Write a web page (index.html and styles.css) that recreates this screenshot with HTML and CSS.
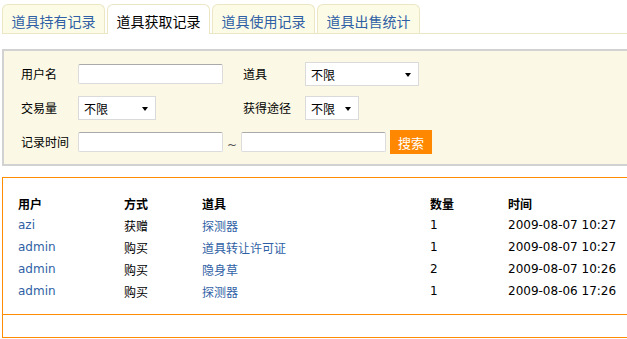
FILE: index.html
```html
<!DOCTYPE html>
<html>
  <head>
    <meta charset="utf-8">
    <link rel="stylesheet" href="styles.css">
  </head>
  <body>
    <div class="page">
      <ul class="tabs">
        <li><a href="#">道具持有记录</a></li>
        <li class="current"><a href="#">道具获取记录</a></li>
        <li><a href="#">道具使用记录</a></li>
        <li><a href="#">道具出售统计</a></li>
      </ul>

      <form class="search">
        <label>用户名</label>
        <div class="field"><input type="text" class="text"></div>
        <label>道具</label>
        <div class="field">
          <span class="select select-item"><select><option>不限</option></select></span>
        </div>

        <label>交易量</label>
        <div class="field">
          <span class="select select-amount"><select><option>不限</option></select></span>
        </div>
        <label>获得途径</label>
        <div class="field">
          <span class="select select-way"><select><option>不限</option></select></span>
        </div>

        <label>记录时间</label>
        <div class="field range">
          <input type="text" class="text">
          <span class="tilde">~</span>
          <input type="text" class="text">
          <button type="button" class="btn">搜索</button>
        </div>
      </form>

      <div class="result">
        <div class="list">
          <table>
            <colgroup>
              <col class="c-user">
              <col class="c-way">
              <col class="c-item">
              <col class="c-num">
              <col class="c-time">
            </colgroup>
            <tr>
              <th>用户</th><th>方式</th><th>道具</th><th>数量</th><th>时间</th>
            </tr>
            <tr>
              <td><a href="#">azi</a></td><td>获赠</td><td><a href="#">探测器</a></td><td>1</td><td>2009-08-07 10:27</td>
            </tr>
            <tr>
              <td><a href="#">admin</a></td><td>购买</td><td><a href="#">道具转让许可证</a></td><td>1</td><td>2009-08-07 10:27</td>
            </tr>
            <tr>
              <td><a href="#">admin</a></td><td>购买</td><td><a href="#">隐身草</a></td><td>2</td><td>2009-08-07 10:26</td>
            </tr>
            <tr>
              <td><a href="#">admin</a></td><td>购买</td><td><a href="#">探测器</a></td><td>1</td><td>2009-08-06 17:26</td>
            </tr>
          </table>
        </div>
        <div class="pager"></div>
      </div>
    </div>
  </body>
</html>
```

FILE: styles.css
```css
body {
  margin: 0;
  padding: 0;
  background: #fff;
  font-family: "DejaVu Sans", "Noto Sans CJK SC", sans-serif;
  font-size: 12px;
  color: #000;
}
a {
  color: #2f5fa5;
  text-decoration: none;
}
.page {
  overflow: hidden;
  padding: 4px 0 0 2px;
}

/* tabs */
.tabs {
  display: flex;
  gap: 2px;
  list-style: none;
  margin: 0 0 15px 0;
  padding: 0;
  border-bottom: 1px solid #ebe6c4;
  height: 29px;
}
.tabs li {
  width: 101px;
  height: 28px;
  border: 1px solid #ebe6c4;
  border-bottom: none;
  border-radius: 6px 6px 0 0;
  background: #fbfbe6;
  text-align: center;
}
.tabs li a {
  display: block;
  padding-top: 8px;
  font-family: "Noto Sans CJK SC", sans-serif;
  font-size: 14px;
  line-height: 16px;
  color: #2f5fa5;
}
.tabs li.current {
  background: #fff;
  height: 29px;
}
.tabs li.current a {
  color: #000;
}

/* search form */
.search {
  display: grid;
  grid-template-columns: 57px 165px 62px 1fr;
  grid-auto-rows: 34px;
  align-items: center;
  margin: 0 -40px 0 0;
  padding: 6px 0 5px 17px;
  border: 2px solid #d2d2d2;
  background: #fbf8e5;
}
.search label {
  font-family: "Noto Sans CJK SC", sans-serif;
  line-height: 14px;
}
.field {
  display: flex;
  align-items: center;
}
.range {
  grid-column: 2 / 5;
}
.text {
  box-sizing: border-box;
  width: 145px;
  height: 20px;
  margin: 0;
  padding: 0 3px;
  border: 1px solid #dcdcdc;
  border-top-color: #aaa;
  border-radius: 2px;
  background: #fff;
}
.tilde {
  width: 18px;
  text-align: center;
  color: #555;
  padding-top: 5px;
}
.btn {
  box-sizing: border-box;
  width: 42px;
  height: 24px;
  margin: 0 0 0 4px;
  padding: 0;
  border: none;
  background: #ff8800;
  color: #fff;
  font-family: "Noto Sans CJK SC", sans-serif;
  font-size: 13px;
}
.select {
  position: relative;
  display: block;
  height: 24px;
}
.select select {
  box-sizing: border-box;
  width: 100%;
  height: 24px;
  margin: 0;
  padding: 0 0 0 5px;
  border: 1px solid #dadada;
  background: #fff;
  -webkit-appearance: none;
  appearance: none;
  font-family: "Noto Sans CJK SC", sans-serif;
  font-size: 12px;
  color: #000;
}
.select::after {
  content: "";
  position: absolute;
  top: 11px;
  right: 8px;
  border-left: 3px solid transparent;
  border-right: 3px solid transparent;
  border-top: 4px solid #000;
}
.select-item {
  width: 114px;
}
.select-amount {
  width: 78px;
}
.select-way {
  width: 54px;
}

/* result list */
.result {
  margin: 11px -40px 0 0;
  border: 1px solid #ff8c00;
}
.list {
  padding: 14px 0 12px 15px;
  border-bottom: 1px solid #ff8c00;
}
.list table {
  border-collapse: collapse;
}
.list th,
.list td {
  height: 22px;
  padding: 0;
  text-align: left;
  white-space: nowrap;
}
.list th {
  font-family: "Noto Sans CJK SC", sans-serif;
  font-weight: bold;
}
.c-user { width: 106px; }
.c-way { width: 78px; }
.c-item { width: 228px; }
.c-num { width: 78px; }
.c-time { width: 140px; }
.pager {
  height: 22px;
}
```
